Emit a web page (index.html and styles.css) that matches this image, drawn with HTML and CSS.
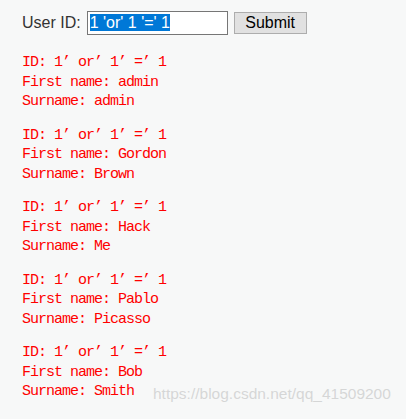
FILE: index.html
```html
<!DOCTYPE html>
<html lang="en">

<head>
    <meta charset="UTF-8">
    <title>User ID</title>
    <link rel="stylesheet" href="styles.css">
</head>

<body>

    <div class="page">
        <form class="lookup" onsubmit="return false">
            <label for="userId">User ID:</label>
            <div class="field" id="userId"><span class="selected">1 'or' 1 '=' 1</span></div>
            <button type="submit">Submit</button>
        </form>

        <pre class="result">ID: 1’ or’ 1’ =’ 1
First name: admin
Surname: admin</pre>
        <pre class="result">ID: 1’ or’ 1’ =’ 1
First name: Gordon
Surname: Brown</pre>
        <pre class="result">ID: 1’ or’ 1’ =’ 1
First name: Hack
Surname: Me</pre>
        <pre class="result">ID: 1’ or’ 1’ =’ 1
First name: Pablo
Surname: Picasso</pre>
        <pre class="result">ID: 1’ or’ 1’ =’ 1
First name: Bob
Surname: Smith</pre>
    </div>

    <div class="watermark">https://blog.csdn.net/qq_41509200</div>

</body>

</html>
```

FILE: styles.css
```css
body {
    margin: 0;
    background: #f7f8f8;
    font-family: "Liberation Sans", Arial, sans-serif;
}

.page {
    padding: 11px 22px 0;
}

.lookup {
    display: flex;
    align-items: center;
    gap: 6px;
    margin: 0;
}

.lookup label {
    font-size: 16px;
    color: #333;
}

.field {
    box-sizing: border-box;
    width: 141px;
    height: 24px;
    border: 1px solid #767676;
    background: white;
    padding: 2px 2px;
    font-size: 16px;
    line-height: 18px;
    white-space: nowrap;
}

.selected {
    background: #0078d7;
    color: white;
}

button {
    box-sizing: border-box;
    width: 73px;
    height: 22px;
    padding: 0;
    border: 1px solid #adadad;
    background: #e1e1e1;
    color: black;
    font-family: "Liberation Sans", Arial, sans-serif;
    font-size: 16px;
}

.result {
    margin: 18px 0 0;
    color: #ff0000;
    font-family: "Liberation Mono", "Courier New", monospace;
    font-size: 15px;
    letter-spacing: -1px;
    line-height: 19.5px;
}

.result + .result {
    margin-top: 14px;
}

.watermark {
    position: absolute;
    left: 153px;
    top: 385px;
    color: rgba(180, 180, 180, 0.5);
    font-size: 15.5px;
}
```
